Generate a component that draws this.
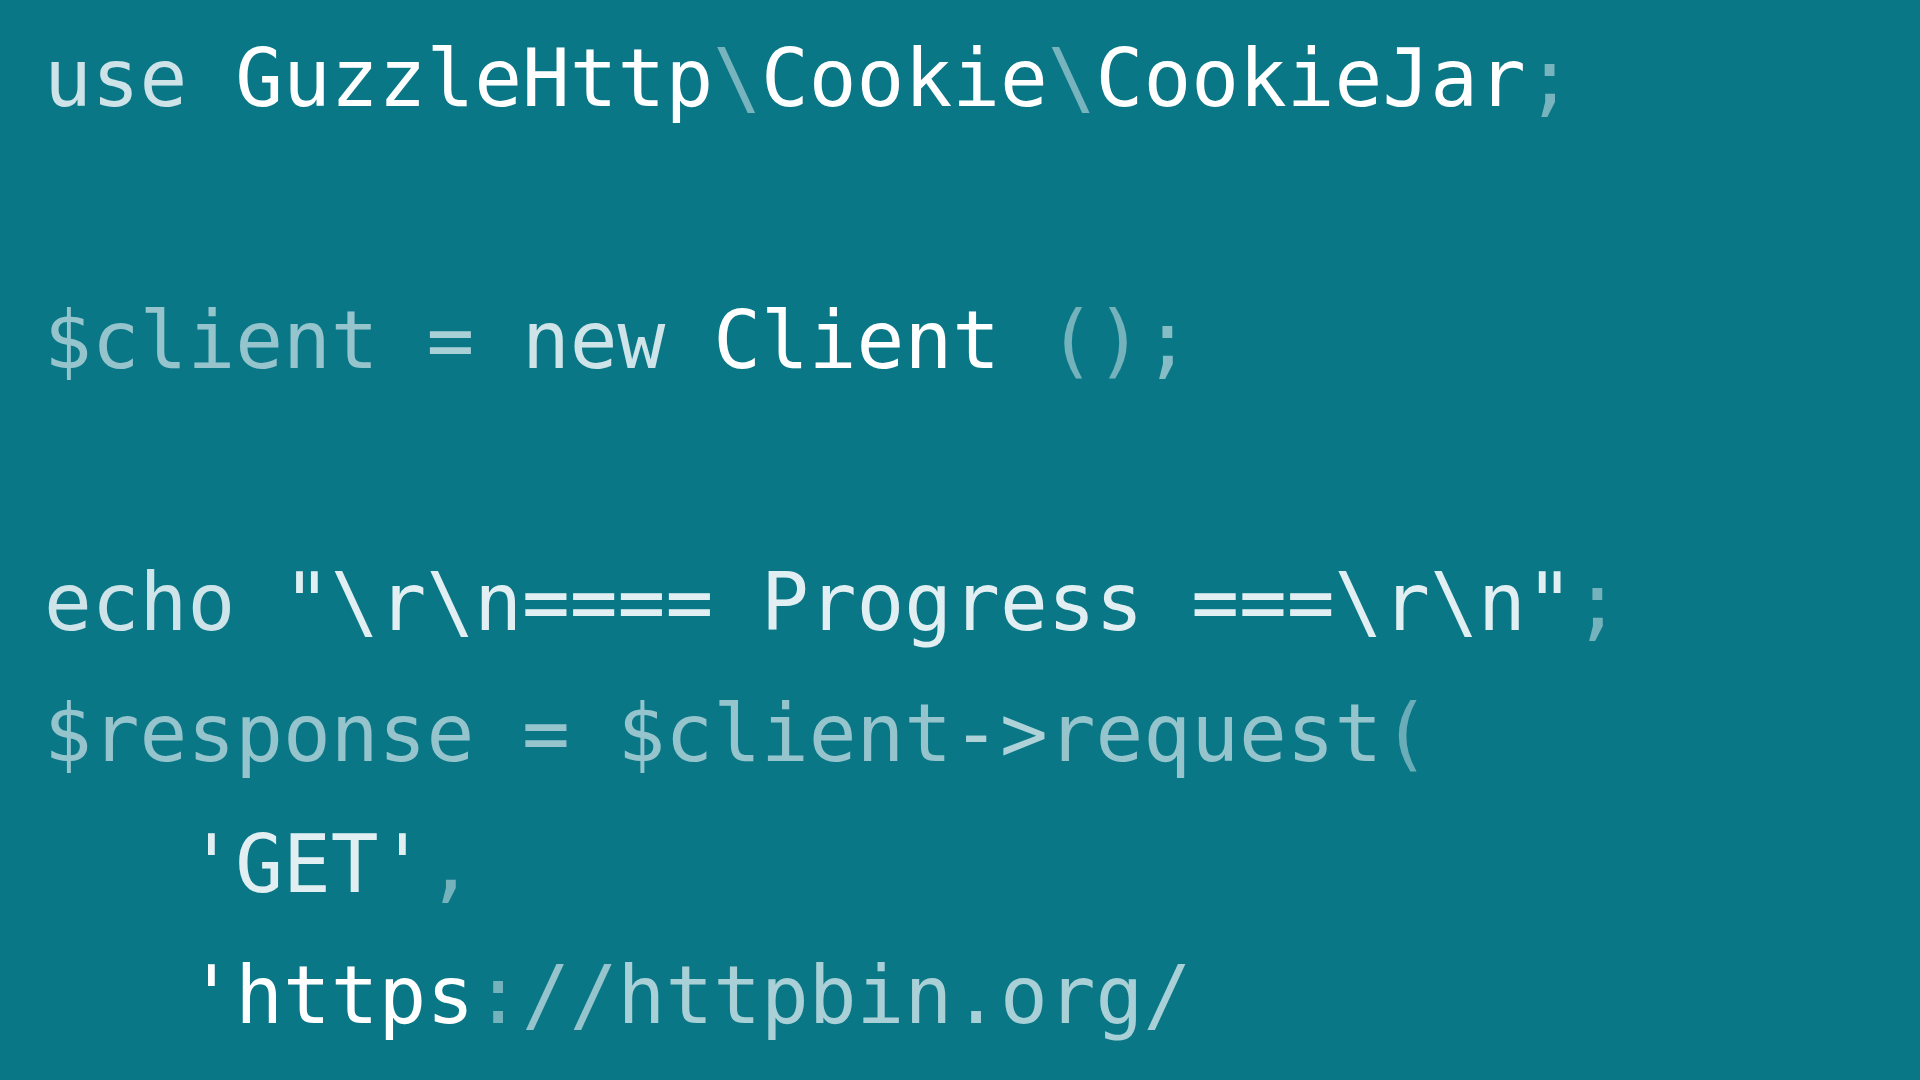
type Tok = { t: string; c: string };

const W = "text-white";

const lines: Tok[][] = [
  [
    { t: "use", c: "text-[#cde3e8]" },
    { t: " GuzzleHttp", c: W },
    { t: "\\", c: "text-[#78b4bd]" },
    { t: "Cookie", c: W },
    { t: "\\", c: "text-[#78b4bd]" },
    { t: "CookieJar", c: W },
    { t: ";", c: "text-[#78b4bd]" },
  ],
  [],
  [
    { t: "$client", c: "text-[#95c4cd]" },
    { t: " = ", c: "text-[#a9d0d7]" },
    { t: "new", c: "text-[#cfe4e9]" },
    { t: " Client", c: W },
    { t: " ()", c: "text-[#74b2bc]" },
    { t: ";", c: "text-[#86bcc5]" },
  ],
  [],
  [
    { t: "echo", c: "text-[#cfe4e9]" },
    { t: ' "\\r\\n==== Progress ===\\r\\n"', c: "text-[#e2eff2]" },
    { t: ";", c: "text-[#74b2bc]" },
  ],
  [
    { t: "$response = $client", c: "text-[#95c4cd]" },
    { t: "->", c: "text-[#aed2d8]" },
    { t: "request", c: "text-[#95c4cd]" },
    { t: "(", c: "text-[#6aacb7]" },
  ],
  [
    { t: "   'GET'", c: "text-[#e2eff2]" },
    { t: ",", c: "text-[#74b2bc]" },
  ],
  [
    { t: "   'https", c: W },
    { t: ":", c: "text-[#74b2bc]" },
    { t: "//", c: "text-[#95c4cd]" },
    { t: "httpbin.org/", c: "text-[#a8d0d6]" },
  ],
];

export default function App() {
  return (
    <div className="h-screen w-full overflow-hidden bg-[#0a7787] pl-[44px] pt-[13px]">
      <pre className="font-['DejaVu_Sans_Mono',monospace] text-[79.4px] leading-[131px] whitespace-pre">
        {lines.map((line, i) => (
          <div key={i} className="h-[131px]">
            {line.map((tok, j) => (
              <span key={j} className={tok.c}>
                {tok.t}
              </span>
            ))}
          </div>
        ))}
      </pre>
    </div>
  );
}
